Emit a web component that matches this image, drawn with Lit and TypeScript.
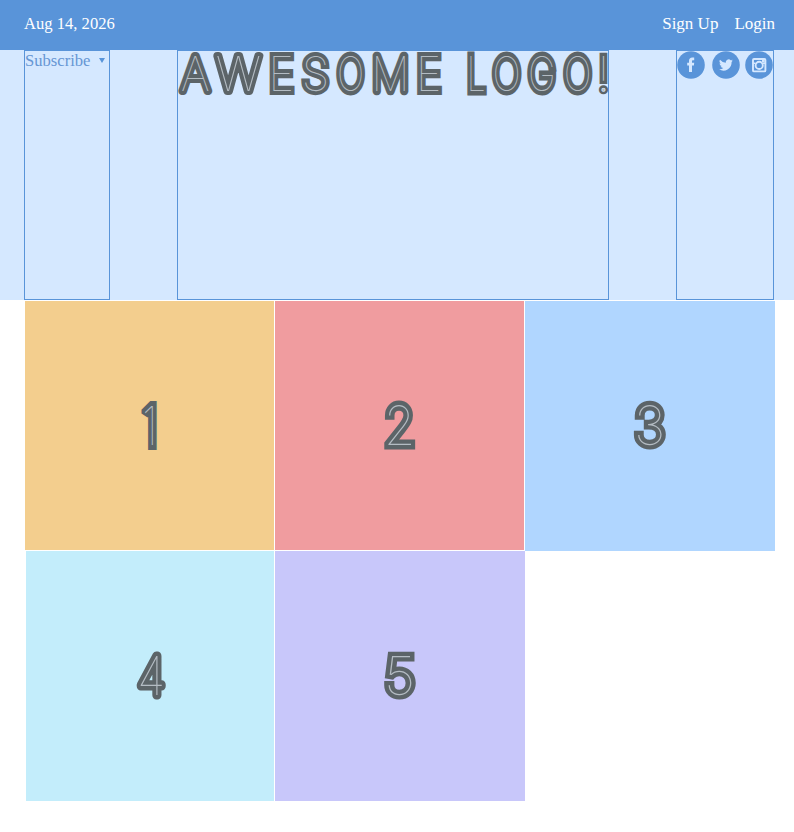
import { LitElement, html, svg, css } from "lit";
import { customElement, property } from "lit/decorators.js";

const FACE = "Inter, sans-serif";
const WEIGHT = 100;

type Slot = [char: string, left: number, right: number];

const pen = document.createElement("canvas").getContext("2d")!;

/** Inline-style lettering: a hairline face inside a heavy stroke, each glyph fitted to its slot. */
@customElement("inline-lettering")
export class InlineLettering extends LitElement {
  @property({ attribute: false }) slots: Slot[] = [];
  @property({ type: Number }) width = 100;
  @property({ type: Number }) height = 48;
  @property({ type: Number }) stroke = 7;

  static styles = css`
    :host { display: block; }
    svg { display: block; overflow: visible; }
    text {
      font-family: Inter, sans-serif;
      font-weight: 100;
      fill: #b4bcc3;
      stroke: #5c6468;
      stroke-linejoin: round;
      paint-order: stroke;
    }
    .square { stroke-linejoin: miter; stroke-miterlimit: 1.6; }
  `;

  render() {
    const cap = this.height - this.stroke;
    const size = cap / 0.727;
    pen.font = `${WEIGHT} ${size}px ${FACE}`;
    const base = this.height - this.stroke / 2;
    return html`<svg width=${this.width} height=${this.height}>
      ${this.slots.map(([c, l, r]) => {
        if (c === " ") return svg`<text x=${l} y=${base} font-size=${size}> </text>`;
        const m = pen.measureText(c);
        const ink = m.actualBoundingBoxRight + m.actualBoundingBoxLeft;
        // Condensed glyphs get a wider stroke so that their stems keep their weight.
        let s = 1;
        let weight = this.stroke;
        if (c === "!") weight -= 1.2;
        else {
          for (let i = 0; i < 8; i++) {
            s = (r - l) / (ink + weight);
            weight = this.stroke / Math.sqrt(Math.min(1, Math.max(0.75, s)));
          }
        }
        const mid = (m.actualBoundingBoxRight - m.actualBoundingBoxLeft) / 2;
        const tx = (l + r) / 2 - s * mid;
        const cls = "AWM4".includes(c) ? "" : "square";
        return svg`<text class=${cls} transform="translate(${tx} ${base}) scale(${s} 1)" font-size=${size} stroke-width=${weight}>${c}</text>`;
      })}
    </svg>`;
  }
}

const LOGO: Slot[] = [
  ["A", 0, 34.3], ["W", 34.7, 85.5], ["E", 91.3, 117], ["S", 122.7, 152], ["O", 158, 187.7],
  ["M", 194.3, 231], ["E", 238.7, 264.3], [" ", 266, 288], ["L", 289, 308.7],
  ["O", 313.3, 344], ["G", 349, 378.7], ["O", 384.7, 415], ["!", 421.3, 429.8],
];

const TILES: { cls: string; slot: Slot }[] = [
  { cls: "amber", slot: ["1", 15.7, 31.7] },
  { cls: "rose", slot: ["2", 8.3, 40.5] },
  { cls: "sky", slot: ["3", 7.8, 40.5] },
  { cls: "aqua", slot: ["4", 9.8, 40.5] },
  { cls: "lilac", slot: ["5", 7.8, 40.5] },
];

@customElement("app-root")
export class AppRoot extends LitElement {
  static styles = css`
    :host { display: block; height: 832px; background: #fff; font: 16.6px "Liberation Serif", serif; overflow: hidden; }
    .bar { box-sizing: border-box; height: 50px; padding: 0 19px 3px 24px; display: flex; align-items: center; justify-content: space-between; background: #5994d9; color: #fff; }
    .links { display: flex; gap: 16px; font-size: 17px; }
    .head { box-sizing: border-box; height: 250px; padding: 0 20px 0 24px; display: flex; justify-content: space-between; background: #d5e8ff; }
    .box { box-sizing: border-box; border: 1px solid #5994d9; }
    .sub { width: 86px; color: #6696d4; display: flex; align-items: flex-start; gap: 8.5px; line-height: 20px; }
    .arrow { margin-top: 7px; border: 3px solid transparent; border-top: 5px solid #5994d9; border-bottom: 0; }
    .logo { width: 432px; padding-top: 1px; }
    .social { width: 98px; display: flex; gap: 7px; }
    .social svg { width: 28px; height: 28px; fill: #5994d9; flex: none; }
    .social svg:last-child { margin-left: -2px; }
    .social .mark { fill: #d5e8ff; }
    .social .line { fill: none; stroke: #d5e8ff; stroke-width: 1.9; }
    .grid { display: grid; grid-template-columns: 249px 249px 250px; grid-template-rows: 249px 250px; gap: 1px; margin: 1px 0 0 25px; }
    .tile { display: flex; align-items: center; justify-content: center; }
    .amber { background: #f3ce8e; }
    .rose { background: #f09c9f; }
    .sky { background: #b0d6ff; height: 250px; }
    .aqua { background: #c3edfb; margin-left: 1px; }
    .lilac { background: #c8c7fa; width: 250px; }
  `;

  render() {
    return html`
      <nav class="bar"><span>Aug 14, 2026</span><div class="links"><span>Sign Up</span><span>Login</span></div></nav>
      <header class="head">
        <div class="box sub"><span>Subscribe</span><i class="arrow"></i></div>
        <div class="box logo"><inline-lettering .slots=${LOGO} .width=${430} .height=${42.5} .stroke=${7.8}></inline-lettering></div>
        <div class="box social">
          <svg viewBox="0 0 28 28"><circle cx="14" cy="14" r="13.8"/><path class="mark" d="M12 21V14.6H10.2V11.8H12V10C12 7.8 13.2 6.6 15.3 6.6H17.2V9.3H16C15.2 9.3 15 9.7 15 10.4V11.8H17.2L16.9 14.6H15V21Z"/></svg>
          <svg viewBox="0 0 28 28"><circle cx="14" cy="14" r="13.8"/><path class="mark" d="M20.8 9.6a6 6 0 0 1-1.5.4 2.6 2.6 0 0 0 1.2-1.5 5 5 0 0 1-1.8.7 2.9 2.9 0 0 0-4.9 2.6 8 8 0 0 1-5.8-3 2.8 2.8 0 0 0 .9 3.8 2.7 2.7 0 0 1-1.3-.4c0 1.5 1 2.6 2.3 2.9a3 3 0 0 1-1.3 0 2.8 2.8 0 0 0 2.7 2 5.7 5.7 0 0 1-4.2 1.2 8.1 8.1 0 0 0 12.5-7.2 6 6 0 0 0 1.2-1.5Z"/></svg>
          <svg viewBox="0 0 28 28"><circle cx="14" cy="14" r="13.8"/><rect class="line" x="8" y="8" width="12.4" height="12.4" rx="1"/><path class="mark" d="M7.5 11.5h3v1.5h-3zM18 11.5h3v1.5h-3z"/><circle class="line" cx="14.2" cy="14.4" r="3.6"/><rect class="mark" x="17" y="9" width="2.6" height="2.4"/></svg>
        </div>
      </header>
      <main class="grid">
        ${TILES.map(t => html`<div class="tile ${t.cls}"><inline-lettering .slots=${[t.slot]} .width=${49} .height=${47.7} .stroke=${8.6}></inline-lettering></div>`)}
      </main>`;
  }
}
